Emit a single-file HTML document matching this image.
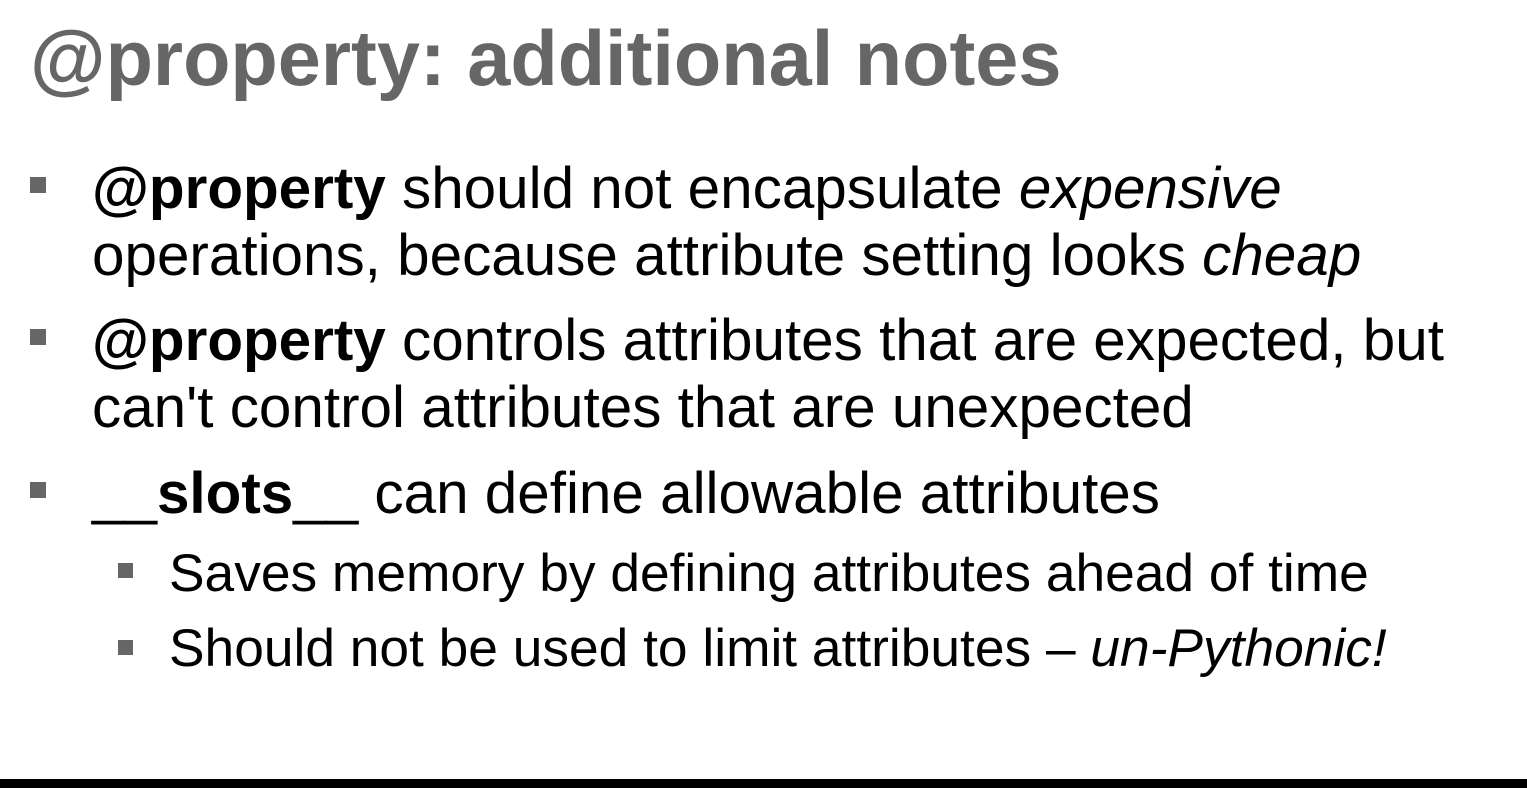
<!DOCTYPE html>
<html><head><meta charset="utf-8"><style>
html,body{margin:0;padding:0;background:#fff;width:1527px;height:788px;overflow:hidden;position:relative;font-family:"Liberation Sans",Arial,sans-serif;color:#000}
.l{position:absolute;white-space:nowrap;line-height:1}
.t{font-size:77.5px;font-weight:bold;color:#666;left:30px;top:21px}
.m{font-size:58.4px;left:92px}
.s{font-size:53.3px;left:169px}
.b{position:absolute;background:#666;width:16px;height:16px}
.sb{position:absolute;background:#666;width:15px;height:15px}
.bar{position:absolute;left:0;top:779px;width:1527px;height:9px;background:#000}
</style></head><body>
<div class="l t">@property: additional notes</div>
<div class="b" style="left:30px;top:177px"></div>
<div class="l m" style="top:160px"><b>@property</b> should not encapsulate <i>expensive</i></div>
<div class="l m" style="top:227px">operations, because attribute setting looks <i>cheap</i></div>
<div class="b" style="left:30px;top:329px"></div>
<div class="l m" style="top:312px"><b>@property</b> controls attributes that are expected, but</div>
<div class="l m" style="top:379px">can't control attributes that are unexpected</div>
<div class="b" style="left:30px;top:482px"></div>
<div class="l m" style="top:465px">__<b>slots</b>__ can define allowable attributes</div>
<div class="sb" style="left:118px;top:563px"></div>
<div class="l s" style="top:547px">Saves memory by defining attributes ahead of time</div>
<div class="sb" style="left:118px;top:640px"></div>
<div class="l s" style="top:622px">Should not be used to limit attributes – <i>un-Pythonic!</i></div>
<div class="bar"></div>
</body></html>
